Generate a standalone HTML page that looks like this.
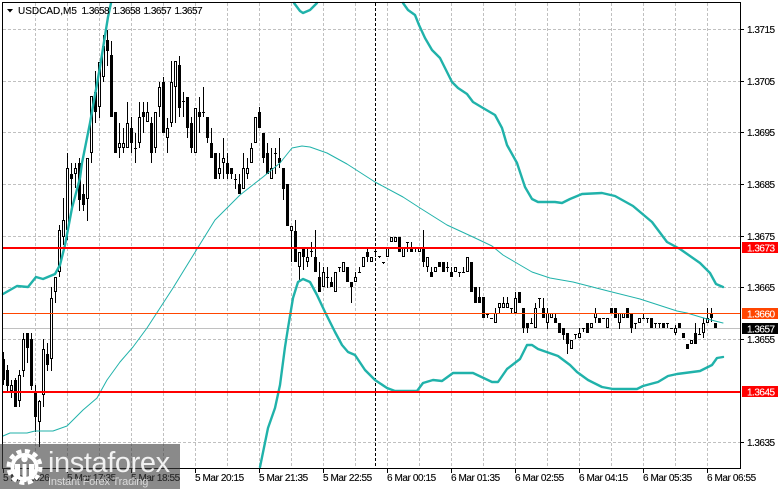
<!DOCTYPE html>
<html lang="en">
<head>
<meta charset="utf-8">
<title>USDCAD,M5</title>
<style>
html,body{margin:0;padding:0;background:#fff;width:781px;height:489px;overflow:hidden}
svg{display:block;position:absolute;left:0;top:0}
text{font-family:"Liberation Sans",sans-serif;font-size:10px;fill:#000;stroke:#000;stroke-width:.12px}
.p{letter-spacing:-.5px}
.t{letter-spacing:-.42px}
.w{fill:#fff;stroke:#fff;letter-spacing:-.5px}
.m{stroke:none}
</style>
</head>
<body>
<svg width="781" height="489" viewBox="0 0 781 489" xmlns="http://www.w3.org/2000/svg">
<rect width="781" height="489" fill="#fff"/>
<!-- grid -->
<g stroke="#c0c0c0" stroke-width="1" stroke-dasharray="3 2" fill="none" shape-rendering="crispEdges">
<path d="M35.5 3V468M67.5 3V468M99.5 3V468M131.5 3V468M163.5 3V468M195.5 3V468M227.5 3V468M259.5 3V468M291.5 3V468M323.5 3V468M355.5 3V468M387.5 3V468M419.5 3V468M451.5 3V468M483.5 3V468M515.5 3V468M547.5 3V468M579.5 3V468M611.5 3V468M643.5 3V468M675.5 3V468M707.5 3V468"/>
<path d="M3 29.5H740M3 81.5H740M3 132.5H740M3 184.5H740M3 236.5H740M3 287.5H740M3 339.5H740M3 391.5H740M3 442.5H740"/>
</g>
<!-- bid line -->
<path d="M3 328.5H740" stroke="#c0c0c0" stroke-width="1" shape-rendering="crispEdges"/>
<!-- period separator -->
<path d="M375.5 3V468" stroke="#000" stroke-width="1" stroke-dasharray="3 2" shape-rendering="crispEdges"/>
<!-- candles -->
<g transform="translate(.5 0)" fill="none" stroke="#000" shape-rendering="crispEdges">
<path stroke-width="1" d="M3 352V385M7 365V392M11 380V398M15 378V407M19 370V407M23 333V377M27 333V363M31 333V390M35 385V432M39 400V447M43 339V407M47 343V371M51 287V371M55 277V303M59 225V277M63 198V245M67 153V240M71 163V207M75 163V188M79 158V211M83 184V211M87 158V221M91 96V163M95 71V123M99 62V118M103 35V82M107 30V66M111 41V117M119 123V158M123 128V153M127 102V148M131 117V153M135 133V163M139 102V148M143 102V133M147 102V122M151 117V163M155 112V153M159 82V117M163 77V133M167 118V153M171 61V127M175 61V123M179 56V117M183 92V117M187 97V138M191 117V153M199 97V133M203 87V117M207 117V143M211 128V158M219 153V179M223 138V179M227 153V179M231 168V179M235 174V189M239 174V194M243 153V189M247 158V179M251 143V163M259 107V128M263 133V163M267 143V174M271 148V179M275 148V174M279 138V168M283 168V200M291 226V262M295 220V262M299 252V280M303 247V270M307 247V267M311 242V257M315 230V272M319 262V292M323 267V287M327 267V288M331 277V287M339 267V272M343 262V272M351 282V303M355 272V282M359 267V272M367 247V262M375 250V257M379 256V258M383 262V264M407 242V252M411 242V252M415 247V252M423 230V267M427 257V272M431 267V277M447 262V272M451 267V277M459 272V277M463 267V272M471 262V292M479 287V303M483 297V318M487 314V318M495 308V323M499 303V313M503 297V308M507 297V308M511 308V313M515 292V313M523 308V333M527 323V333M531 318V323M535 303V328M539 298V308M543 298V318M547 308V329M551 313V318M555 313V323M559 323V333M563 328V340M567 333V354M571 340V349M575 334V339M579 328V338M583 328V332M595 308V323M611 308V313M615 308V318M619 313V329M627 308V318M631 313V333M635 323V329M643 313V318M647 318V323M655 323V328M659 323V328M667 323V328M675 325V335M695 323V344M699 328V334M703 318V338M707 308V323M711 308V322"/>
<path stroke-width="3" d="M3 359V380M7 370V386M11 385V391M15 380V407M19 375V401M23 339V371M27 333V348M31 339V386M35 391V417M39 401V422M43 349V395M47 354V365M51 298V359M55 277V292M59 230V272M63 220V237M67 168V230M71 174V179M75 168V174M79 163V200M83 194V205M87 158V199M91 96V153M95 92V112M99 62V107M103 46V77M107 40V51M111 55V117M115 112V153M119 143V148M123 143V148M127 123V148M131 128V143M139 117V143M143 112V117M147 112V122M151 123V153M155 112V148M159 87V107M163 82V133M167 128V138M171 82V123M175 61V87M179 65V108M187 97V128M191 123V148M195 108V153M199 112V117M207 117V138M211 143V158M215 153V179M219 168V174M223 158V163M227 163V174M231 168V174M239 184V194M243 168V189M247 168V174M251 148V163M255 117V143M259 112V128M263 133V158M267 153V174M271 168V179M279 158V163M283 168V189M287 184V226M291 226V231M295 231V262M299 252V267M303 247V257M307 257V262M315 257V272M319 277V292M323 272V287M331 282V287M335 272V292M343 262V272M347 267V282M351 282V287M355 277V282M363 257V267M367 252V257M371 257V262M387 247V257M391 237V242M395 237V242M399 237V252M403 247V257M411 247V252M419 247V252M423 247V262M427 257V267M431 272V277M435 267V272M439 262V267M443 262V272M451 272V277M455 267V272M467 257V272M471 262V292M475 287V303M479 297V303M483 297V318M495 313V323M499 303V308M503 303V308M507 303V308M515 298V313M519 292V303M523 308V328M527 323V328M535 308V328M543 308V318M547 313V323M551 313V318M555 318V323M559 323V333M563 328V335M567 333V344M571 340V349M579 333V338M587 323V333M591 323V328M595 313V318M599 318V323M607 318V328M611 308V313M615 308V318M619 313V323M623 313V318M627 308V318M631 313V328M639 318V323M651 318V328M663 323V328M675 328V333M679 323V328M683 333V338M687 344V349M691 340V344M695 333V344M703 323V333M707 318V323M711 313V318M715 323V328"/>
<path stroke-width="1" stroke="#fff" d="M11 386V390M19 376V400M23 340V370M39 402V421M43 350V394M51 299V358M55 278V291M59 231V271M63 221V236M67 169V229M75 169V173M87 159V198M91 97V152M99 63V106M103 47V76M119 144V147M123 144V147M127 124V147M139 118V142M147 113V121M155 113V147M159 88V106M167 129V137M171 83V122M175 62V86M195 109V152M219 169V173M223 159V162M243 169V188M247 169V173M251 149V162M255 118V142M271 169V178M291 227V230M299 253V266M307 258V261M323 273V286M335 273V291M343 263V271M355 278V281M363 258V266M371 258V261M387 248V256M391 238V241M395 238V241M403 248V256M419 248V251M427 258V266M435 268V271M455 268V271M467 258V271M495 314V322M499 304V307M503 304V307M507 304V307M515 299V312M535 309V327M547 314V322M551 314V317M571 341V348M579 334V337M591 324V327M595 314V317M607 319V327M619 314V322M623 314V317M639 319V322M675 329V332M691 341V343M703 324V332M707 319V322"/>
</g>
<path stroke="#000" stroke-width="1" fill="none" shape-rendering="crispEdges" d="M134 148.5h3M182 101.5h3M202 112.5h3M234 179.5h3M274 153.5h3M310 251.5h3M326 277.5h3M338 267.5h3M358 272.5h3M374 251.5h3M378 256.5h3M382 262.5h3M406 242.5h3M414 247.5h3M446 267.5h3M458 272.5h3M462 272.5h3M486 314.5h3M490 318.5h3M510 308.5h3M530 323.5h3M538 298.5h3M574 334.5h3M582 328.5h3M602 318.5h3M634 323.5h3M642 318.5h3M646 318.5h3M654 323.5h3M658 323.5h3M666 323.5h3M670 328.5h3M698 334.5h3"/>
<!-- bollinger -->
<g fill="none" stroke="#20b2aa" stroke-linejoin="round" stroke-linecap="round">
<path stroke-width="2.4" d="M3 294L17 286L28 287L36 277L43 279L55 274L60 265L65 245L72 208L80 178L82 163L90 123L100 67L108 17L111 3"/>
<path stroke-width="2.4" d="M294 3L300 11L303 13L310 10L317 3"/>
<path stroke-width="2.4" d="M403 3L408 10L415 15L419 25L425 38L432 50L440 58L452 82L458 88L467 94L473 102L483 108L495 115L502 128L507 145L517 163L520 172L525 187L532 199L538 202L555 202L562 203L570 199L582 194L602 193L615 196L633 206L652 222L667 242L680 249L700 263L710 273L716 284L723 287"/>
<path stroke-width="1" d="M3 436L10 433L27 433L35 431L53 431L67 426L83 410L97 398L107 380L120 362L133 347L147 328L173 288L197 249L215 220L240 195L263 177L280 163L292 148L302 146L310 147L327 153L347 164L375 182L403 197L420 208L447 225L473 237L492 246L503 255L520 265L532 272L550 278L573 282L608 291L640 299L677 311L687 313L707 319L723 323"/>
<path stroke-width="2.4" d="M260 467L268 428L275 408L280 385L285 347L288 328L293 298L298 282L303 279L310 282L317 295L325 312L335 332L342 345L348 352L355 355L365 370L375 380L387 388L395 391L417 391L423 383L433 380L442 381L453 373L473 373L492 382L498 382L507 369L520 359L527 345L532 345L538 349L558 356L570 365L577 372L588 380L602 387L613 389L637 389L643 386L658 382L668 376L677 374L700 371L712 365L717 358L723 357"/>
</g>
<!-- levels -->
<g shape-rendering="crispEdges">
<rect x="3" y="247" width="737" height="2" fill="#ff0000"/>
<rect x="3" y="391" width="737" height="2" fill="#ff0000"/>
<rect x="3" y="313" width="737" height="1" fill="#ff4500"/>
</g>
<!-- frame -->
<g stroke="#000" fill="none" stroke-width="1" shape-rendering="crispEdges">
<path d="M2.5 2.5H740.5V468.5H2.5Z"/>
<path d="M741 29.5h3M741 81.5h3M741 132.5h3M741 184.5h3M741 236.5h3M741 287.5h3M741 339.5h3M741 442.5h3"/>
<path d="M3.5 469v4M67.5 469v4M131.5 469v4M195.5 469v4M259.5 469v4M323.5 469v4M387.5 469v4M451.5 469v4M515.5 469v4M579.5 469v4M643.5 469v4M707.5 469v4"/>
</g>
<!-- header -->
<path d="M7 9h6l-3 3.5z" fill="#000"/>
<text x="18" y="14">USDCAD,M5</text>
<text class="p" x="81.5" y="14">1.3658</text>
<text class="p" x="112.5" y="14">1.3658</text>
<text class="p" x="143.5" y="14">1.3657</text>
<text class="p" x="174.5" y="14">1.3657</text>
<!-- price axis -->
<text class="p" x="747" y="33">1.3715</text>
<text class="p" x="747" y="85">1.3705</text>
<text class="p" x="747" y="136">1.3695</text>
<text class="p" x="747" y="188">1.3685</text>
<text class="p" x="747" y="240">1.3675</text>
<text class="p" x="747" y="291">1.3665</text>
<text class="p" x="747" y="343">1.3655</text>
<text class="p" x="747" y="446">1.3635</text>
<g shape-rendering="crispEdges">
<rect x="742" y="242" width="36" height="11" fill="#ff0000"/>
<rect x="742" y="386" width="36" height="11" fill="#ff0000"/>
<rect x="742" y="308" width="36" height="11" fill="#ff4500"/>
<rect x="742" y="323" width="36" height="11" fill="#000"/>
</g>
<text class="w" x="747" y="251.5">1.3673</text>
<text class="w" x="747" y="395.5">1.3645</text>
<text class="w" x="747" y="317.5">1.3660</text>
<text class="w" x="747" y="332.5">1.3657</text>
<!-- time axis -->
<text class="t" x="3" y="481">5 Mar 2026</text>
<text class="t" x="67" y="481">5 Mar 17:35</text>
<text class="t" x="131" y="481">5 Mar 18:55</text>
<text class="t" x="195" y="481">5 Mar 20:15</text>
<text class="t" x="259" y="481">5 Mar 21:35</text>
<text class="t" x="323" y="481">5 Mar 22:55</text>
<text class="t" x="387" y="481">6 Mar 00:15</text>
<text class="t" x="451" y="481">6 Mar 01:35</text>
<text class="t" x="515" y="481">6 Mar 02:55</text>
<text class="t" x="579" y="481">6 Mar 04:15</text>
<text class="t" x="643" y="481">6 Mar 05:35</text>
<text class="t" x="707" y="481">6 Mar 06:55</text>
<!-- watermark -->
<rect x="0" y="444" width="180" height="45" fill="#3c3c3c" fill-opacity=".6"/>
<g fill="none" stroke="#fff">
<circle cx="24.5" cy="467" r="16" stroke-width="4" stroke-dasharray="5 3.4"/>
<circle cx="24.5" cy="467" r="12" stroke-width="4"/>
</g>
<g fill="#fff">
<circle cx="24.5" cy="459" r="3.2"/>
<rect x="15" y="464" width="5" height="15"/>
<rect x="22.5" y="464" width="4" height="18"/>
<rect x="29" y="464" width="5" height="15"/>
</g>
<text class="m" x="48" y="472" style="font-size:29px;fill:#fff;fill-opacity:.88;letter-spacing:-.4px">instaforex</text>
<text class="m" x="48" y="485" style="font-size:11px;fill:#e8e8e8;fill-opacity:.85;letter-spacing:-.18px">Instant Forex Trading</text>
</svg>
</body>
</html>
